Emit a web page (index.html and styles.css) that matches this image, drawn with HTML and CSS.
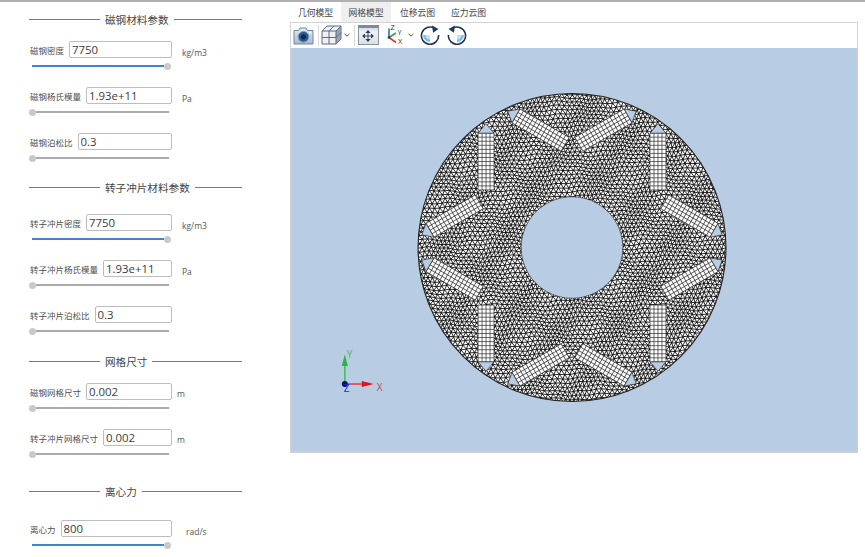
FILE: index.html
```html
<!DOCTYPE html>
<html lang="zh">
<head>
<meta charset="utf-8">
<title>网格模型</title>
<link rel="stylesheet" href="styles.css">
</head>
<body>
<div class="app">
  <aside class="panel">
    <h2 class="heading h1"><span>磁钢材料参数</span></h2>
    <div class="row">
      <div class="line"><label class="field"><span class="lab">磁钢密度</span><input class="val" value="7750"></label><span class="unit">kg/m3</span></div>
      <div class="slider full"><i class="track"></i><b class="thumb"></b></div>
    </div>
    <div class="row">
      <div class="line"><label class="field"><span class="lab">磁钢杨氏模量</span><input class="val" value="1.93e+11"></label><span class="unit">Pa</span></div>
      <div class="slider"><b class="thumb"></b><i class="track"></i></div>
    </div>
    <div class="row">
      <div class="line"><label class="field"><span class="lab">磁钢泊松比</span><input class="val" value="0.3"></label></div>
      <div class="slider"><b class="thumb"></b><i class="track"></i></div>
    </div>

    <h2 class="heading h2"><span>转子冲片材料参数</span></h2>
    <div class="row">
      <div class="line"><label class="field"><span class="lab">转子冲片密度</span><input class="val" value="7750"></label><span class="unit">kg/m3</span></div>
      <div class="slider full"><i class="track"></i><b class="thumb"></b></div>
    </div>
    <div class="row">
      <div class="line"><label class="field"><span class="lab">转子冲片杨氏模量</span><input class="val" value="1.93e+11"></label><span class="unit">Pa</span></div>
      <div class="slider"><b class="thumb"></b><i class="track"></i></div>
    </div>
    <div class="row">
      <div class="line"><label class="field"><span class="lab">转子冲片泊松比</span><input class="val" value="0.3"></label></div>
      <div class="slider"><b class="thumb"></b><i class="track"></i></div>
    </div>

    <h2 class="heading h3"><span>网格尺寸</span></h2>
    <div class="row">
      <div class="line"><label class="field"><span class="lab">磁钢网格尺寸</span><input class="val" value="0.002"></label><span class="unit near">m</span></div>
      <div class="slider"><b class="thumb"></b><i class="track"></i></div>
    </div>
    <div class="row">
      <div class="line"><label class="field"><span class="lab">转子冲片网格尺寸</span><input class="val" value="0.002"></label><span class="unit near">m</span></div>
      <div class="slider"><b class="thumb"></b><i class="track"></i></div>
    </div>

    <h2 class="heading h4"><span>离心力</span></h2>
    <div class="row">
      <div class="line"><label class="field"><span class="lab">离心力</span><input class="val" value="800"></label><span class="unit far">rad/s</span></div>
      <div class="slider full"><i class="track"></i><b class="thumb"></b></div>
    </div>
  </aside>

  <main class="main">
    <nav class="tabs">
      <span class="tab">几何模型</span>
      <span class="tab active">网格模型</span>
      <span class="tab">位移云图</span>
      <span class="tab">应力云图</span>
    </nav>
    <div class="toolbar">
      <svg class="ico cam" viewBox="0 0 21 19">
        <defs><linearGradient id="camg" x1="0" y1="0" x2="0" y2="1"><stop offset="0" stop-color="#e6ebf1"/><stop offset="1" stop-color="#a9bbcf"/></linearGradient></defs>
        <path d="M1 4.5h4.5l1.5-2.5h6l1.5 2.5h5.5v13.5h-19z" fill="url(#camg)" stroke="#6b86a3"/>
        <circle cx="10.5" cy="10.8" r="5.4" fill="#2a5a94" stroke="#8aa0b9"/>
        <circle cx="10.5" cy="10.8" r="2.6" fill="#0d2c55"/>
        <rect x="16" y="5.8" width="2.4" height="1.6" fill="#f5f7fa"/>
      </svg>
      <i class="sep"></i>
      <svg class="ico cube" viewBox="0 0 21 20">
        <path d="M1 6l5-5h14v13l-5 5H1z" fill="#eef0f3" stroke="#5e6a78"/>
        <path d="M15 6l5-5v13l-5 5z" fill="#7d8b9c" opacity=".75"/>
        <path d="M1 6h14v13M15 6l5-5M8 6v13M1 12.5h14M8 6l5-5M15 12.5l5-5" fill="none" stroke="#5e6a78"/>
      </svg>
      <svg class="chev" viewBox="0 0 6 4"><path d="M.5.8L3 3.2 5.5.8" fill="none" stroke="#555" stroke-width="1"/></svg>
      <i class="sep"></i>
      <span class="btn-on">
        <svg class="ico fit" viewBox="3 3 14 14">
          <path d="M10 4l-2.6 3h5.2zM10 16l-2.6-3h5.2zM4 10l3-2.6v5.2zM16 10l-3-2.6v5.2z" fill="#2d3f55"/>
          <path d="M10 7v6M7 10h6" stroke="#2d3f55" stroke-width=".9"/>
        </svg>
      </span>
      <svg class="ico axes" viewBox="0 0 20 20">
        <path d="M3 12.5V3.5" stroke="#2c6fc0" stroke-width="1.6" fill="none"/>
        <path d="M3 12.5l7-4.5" stroke="#2f9e4f" stroke-width="1.6" fill="none"/>
        <path d="M3 12.5l7 5" stroke="#d8383a" stroke-width="1.6" fill="none"/>
        <circle cx="3" cy="12.5" r="1.4" fill="#3b4a5a"/>
        <text x="4.5" y="5" class="axl">Z</text>
        <text x="11.5" y="10" class="axl">Y</text>
        <text x="12" y="19" class="axl">X</text>
      </svg>
      <svg class="chev c2" viewBox="0 0 6 4"><path d="M.5.8L3 3.2 5.5.8" fill="none" stroke="#555" stroke-width="1"/></svg>
      <svg class="ico rot" viewBox="0 0 20 20">
        <path d="M3 10h7v7.2a7.2 7.2 0 0 1-7-7.2z" fill="#7cc0ea"/>
        <path d="M5.5 10H10v4.5a4.5 4.5 0 0 1-4.5-4.5z" fill="#bfe2f6"/>
        <path d="M14.6 3.4A8.6 8.6 0 1 0 18.6 10" fill="none" stroke="#22344b" stroke-width="1.6"/>
        <path d="M12 .4l6.5 3.6-5.4 3.8z" fill="#1d3a5e"/>
      </svg>
      <svg class="ico rot r2" viewBox="0 0 20 20">
        <path d="M17 10h-7v7.2a7.2 7.2 0 0 0 7-7.2z" fill="#7cc0ea"/>
        <path d="M14.5 10H10v4.5a4.5 4.5 0 0 0 4.5-4.5z" fill="#bfe2f6"/>
        <path d="M5.4 3.4A8.6 8.6 0 1 1 1.4 10" fill="none" stroke="#22344b" stroke-width="1.6"/>
        <path d="M8 .4l-6.5 3.6 5.4 3.8z" fill="#1d3a5e"/>
      </svg>
    </div>
    <div class="viewport">
      <svg id="scene" class="scene" viewBox="291 48 567 404">
        <defs>
          <clipPath id="disc"><circle cx="573" cy="248" r="154.5"/></clipPath>
        </defs>
        <circle class="plate" cx="573" cy="248" r="154.5"/>
        <path id="mesh" clip-path="url(#disc)" fill="none" stroke="#000" stroke-width=".85"/>
        <g id="magnets"></g>
        <path class="hole" d="M573 197a51 51 0 1 0 .01 0z"/>
        <circle class="rim" cx="573" cy="248" r="154.5"/>
        <g class="axis">
          <path d="M345 385V366" stroke="#40c456" stroke-width="1.6"/>
          <path d="M345 355l-3 12h6z" fill="#2ab53f"/>
          <path d="M345 385h17" stroke="#d33" stroke-width="1.4"/>
          <path d="M374 385l-12-3v6z" fill="#e01414"/>
          <circle cx="345" cy="385" r="3" fill="#08106b"/>
          <text x="347" y="359" class="ax-y">Y</text>
          <text x="377" y="392" class="ax-x">X</text>
          <text x="344" y="393" class="ax-z">Z</text>
        </g>
      </svg>
    </div>
  </main>
</div>
<script src="mesh.js"></script>
</body>
</html>
```
FILE: styles.css
```css
* { box-sizing: border-box; }
html, body { margin: 0; height: 100%; background: #fff; overflow: hidden; }
body { border-top: 2px solid #b0b0b0; font-family: "Noto Sans CJK SC", "Noto Sans", sans-serif; color: #444; }
.app { display: flex; height: 555px; }

.panel { width: 290px; flex: none; padding-left: 29px; }
.heading { width: 213px; height: 18px; margin: 0; display: flex; align-items: center; gap: 5px; font-size: 10.6px; font-weight: 400; color: #444; }
.heading::before { content: ""; width: 71px; flex: none; height: 1px; background: #777; }
.heading::after { content: ""; flex: 1; height: 1px; background: #777; }
.h1 { margin-top: 8px; }
.h2 { margin-top: -1px; }
.h3 { margin-top: 2px; }
.h4 { margin-top: 15px; }
.h1 + .row, .h3 + .row { margin-top: 13px; }
.h2 + .row { margin-top: 18px; }
.h4 + .row { margin-top: 20px; }

.row { height: 38px; margin-bottom: 8px; padding-left: 1px; }
.line { display: flex; align-items: center; height: 17px; }
.field { width: 142px; flex: none; display: flex; align-items: center; gap: 5px; }
.lab { font-size: 8.5px; white-space: nowrap; color: #505050; }
.val { flex: 1; min-width: 0; height: 17px; padding: 0 2px; border: 1px solid #bdbdbd; border-radius: 2px; background: #fff; font: 11.4px "Open Sans", sans-serif; color: #3c3c3c; outline: 0; }
.unit { margin: 5px 0 0 10px; font: 8.5px "Open Sans", sans-serif; color: #555; }
.unit.near { margin: 3px 0 0 5px; }
.unit.far { margin: 5px 0 0 14px; }

.slider { display: flex; align-items: center; width: 139.5px; height: 8px; margin-top: 4px; margin-left: -1px; }
.slider.full { margin-left: 2px; width: 139px; }
.track { flex: 1; height: 1.5px; background: #aaa; }
.full .track { background: #3e86c8; height: 2px; }
.thumb { width: 7px; height: 7px; flex: none; border-radius: 50%; background: #c9c9c9; }

.main { width: 568px; flex: none; display: flex; flex-direction: column; height: 451px; }
.tabs { display: flex; height: 20px; }
.tab { width: 51px; display: flex; align-items: center; justify-content: center; font-size: 8.8px; color: #444; }
.tab.active { background: #efefef; width: 50px; margin-right: 1px; }
.toolbar { height: 26px; flex: none; display: flex; align-items: center; padding: 0 0 1px 2px; background: #fff; border: 1px solid #d4d4d4; border-bottom: 0; }
.ico { display: block; flex: none; }
.cam { width: 21px; height: 19px; }
.sep { width: 1px; height: 21px; background: #d9d9d9; margin: 0 2px 0 3.5px; flex: none; }
.cube { width: 21px; height: 20px; }
.chev { width: 6px; height: 4px; margin: 0 0.5px 0 2px; flex: none; }
.btn-on { width: 21px; height: 20px; margin-left: 1px; flex: none; background: linear-gradient(#d6dce4, #eef1f5 25%, #dbe0e7); border: 1px solid #8a95a3; border-top: 3px solid #7d8a9b; display: flex; align-items: center; justify-content: center; }
.fit { width: 14px; height: 14px; }
.axes { width: 20px; height: 20px; margin-left: 7px; }
.axl { font: 7.5px "Open Sans", sans-serif; fill: #333; }
.rot { width: 20px; height: 20px; margin-left: 5.5px; }
.r2 { margin-left: 7px; }
.viewport { flex: 1; min-height: 0; background: #b8cce4; border-right: 2px solid #c3cdd8; border-bottom: 2px solid #cfcfcf; border-left: 1px solid #ccd4dd; }
.scene { display: block; width: 100%; height: 100%; }
.plate { fill: #fff; }
.hole { fill: #b8cce4; stroke: #222; stroke-width: .6; }
.rim { fill: none; stroke: #222; stroke-width: 1.1; }
.slot { fill: #b8cce4; stroke: #222; stroke-width: .6; }
.mag { fill: #fff; stroke: none; }
.mag-grid { fill: none; stroke: #2a2a2a; stroke-width: .7; }
.axis text { font: 10px "Open Sans", sans-serif; }
.ax-y { fill: #48b860; }
.ax-x { fill: #b9505a; }
.ax-z { fill: #1c2fd0; }
```
FILE: mesh.js
```js
(function () {
  var cx = 573, cy = 248, NS = "http://www.w3.org/2000/svg";
  var step = 4.7, rowH = step * 0.866;
  function px(i, j) {
    var x = cx - 170 + i * step + (j % 2 ? step / 2 : 0);
    var y = cy - 170 + j * rowH;
    var dx = 1.2 * Math.sin(x * 0.11 + y * 0.07) + 0.6 * Math.sin(y * 0.31 + x * 0.05);
    var dy = 1.2 * Math.cos(y * 0.1 - x * 0.08) + 0.6 * Math.sin(x * 0.29);
    return [x + dx, y + dy];
  }
  var d = [], cols = 75, rows = 86;
  function seg(a, b) {
    d.push("M" + a[0].toFixed(1) + " " + a[1].toFixed(1) + "L" + b[0].toFixed(1) + " " + b[1].toFixed(1));
  }
  for (var j = 0; j < rows; j++) {
    for (var i = 0; i < cols; i++) {
      var p = px(i, j);
      seg(p, px(i + 1, j));
      var n = j % 2 ? i + 1 : i;
      seg(p, px(n, j + 1));
      seg(p, px(n - 1, j + 1));
    }
  }
  document.getElementById("mesh").setAttribute("d", d.join(""));

  var host = document.getElementById("magnets");
  var L = 57, W = 16, R = 122, cells = 4, segs = 14;
  for (var k = 0; k < 12; k++) {
    var pos = 15 + 30 * k;
    var dir = pos + (k % 2 ? 45 : -45);
    var rad = pos * Math.PI / 180;
    var mx = cx + R * Math.cos(rad), my = cy - R * Math.sin(rad);
    var dr = dir * Math.PI / 180;
    var ux = Math.cos(dr), uy = -Math.sin(dr);
    if (ux * (mx - cx) + uy * (my - cy) < 0) { dir += 180; }
    var g = document.createElementNS(NS, "g");
    g.setAttribute("transform", "translate(" + mx.toFixed(2) + " " + my.toFixed(2) + ") rotate(" + (-dir) + ")");
    var grid = "";
    for (var a = 0; a <= segs; a++) {
      var gx = -L / 2 + a * L / segs;
      grid += "M" + gx.toFixed(2) + " " + (-W / 2) + "V" + (W / 2);
    }
    for (var b = 0; b <= cells; b++) {
      var gy = -W / 2 + b * W / cells;
      grid += "M" + (-L / 2) + " " + gy.toFixed(2) + "H" + (L / 2);
    }
    g.innerHTML =
      '<rect class="mag" x="' + (-L / 2) + '" y="' + (-W / 2) + '" width="' + L + '" height="' + W + '"/>' +
      '<path class="mag-grid" d="' + grid + '"/>' +
      '<path class="slot" d="M' + (L / 2) + ' ' + (-W / 2) + 'L' + (L / 2 + 9.5) + ' 0L' + (L / 2) + ' ' + (W / 2) + 'z"/>';
    host.appendChild(g);
  }
})();
```
